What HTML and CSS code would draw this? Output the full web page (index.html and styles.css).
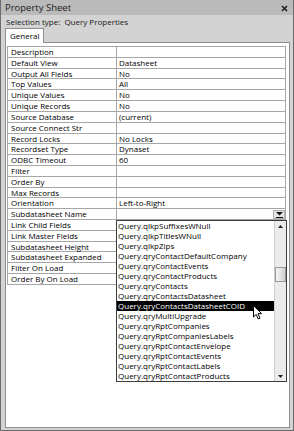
FILE: index.html
```html
<!DOCTYPE html>
<html lang="en">
<head>
<meta charset="utf-8">
<title>Property Sheet</title>
<link rel="stylesheet" href="styles.css">
</head>
<body>
<div class="sheet">
	<div class="titlebar">
		<span class="title">Property Sheet</span>
		<svg class="close" width="7" height="7" viewBox="0 0 7 7"><path d="M1 1 L6 6 M6 1 L1 6" stroke="#222" stroke-width="1.6"/></svg>
	</div>
	<div class="selection">Selection type:&nbsp; Query Properties</div>
	<div class="tabs"><div class="tab">General</div></div>
	<div class="panel">
		<div class="props">
			<div class="row"><div class="name">Description</div><div class="value"></div></div>
			<div class="row"><div class="name">Default View</div><div class="value">Datasheet</div></div>
			<div class="row"><div class="name">Output All Fields</div><div class="value">No</div></div>
			<div class="row"><div class="name">Top Values</div><div class="value">All</div></div>
			<div class="row"><div class="name">Unique Values</div><div class="value">No</div></div>
			<div class="row"><div class="name">Unique Records</div><div class="value">No</div></div>
			<div class="row"><div class="name">Source Database</div><div class="value">(current)</div></div>
			<div class="row"><div class="name">Source Connect Str</div><div class="value"></div></div>
			<div class="row"><div class="name">Record Locks</div><div class="value">No Locks</div></div>
			<div class="row"><div class="name">Recordset Type</div><div class="value">Dynaset</div></div>
			<div class="row"><div class="name">ODBC Timeout</div><div class="value">60</div></div>
			<div class="row"><div class="name">Filter</div><div class="value"></div></div>
			<div class="row"><div class="name">Order By</div><div class="value"></div></div>
			<div class="row"><div class="name">Max Records</div><div class="value"></div></div>
			<div class="row"><div class="name">Orientation</div><div class="value">Left-to-Right</div></div>
			<div class="row"><div class="name">Subdatasheet Name</div>
				<div class="value combo">
					<span class="drop"><svg width="7" height="6" viewBox="0 0 7 6"><path d="M0 0 H7 L3.5 3.5 Z" fill="#111"/><path d="M0 5.5 H7" stroke="#111"/></svg></span>
					<div class="list">
						<div class="items">
							<div class="item">Query.qlkpSuffixesWNull</div>
							<div class="item">Query.qlkpTitlesWNull</div>
							<div class="item">Query.qlkpZips</div>
							<div class="item">Query.qryContactDefaultCompany</div>
							<div class="item">Query.qryContactEvents</div>
							<div class="item">Query.qryContactProducts</div>
							<div class="item">Query.qryContacts</div>
							<div class="item">Query.qryContactsDatasheet</div>
							<div class="item selected">Query.qryContactsDatasheetCOID</div>
							<div class="item">Query.qryMultiUpgrade</div>
							<div class="item">Query.qryRptCompanies</div>
							<div class="item">Query.qryRptCompaniesLabels</div>
							<div class="item">Query.qryRptContactEnvelope</div>
							<div class="item">Query.qryRptContactEvents</div>
							<div class="item">Query.qryRptContactLabels</div>
							<div class="item">Query.qryRptContactProducts</div>
						</div>
						<div class="scroll">
							<div class="arrow"><svg width="5" height="3" viewBox="0 0 5 3"><path d="M0 3 L2.5 0 L5 3 Z" fill="#222"/></svg></div>
							<div class="track-top"></div>
							<div class="thumb"></div>
							<div class="track-bottom"></div>
							<div class="arrow"><svg width="5" height="3" viewBox="0 0 5 3"><path d="M0 0 L2.5 3 L5 0 Z" fill="#222"/></svg></div>
						</div>
						<svg class="cursor" width="10" height="15" viewBox="0 0 10 15"><path d="M0.5 0.5 V12 L3.2 9.4 L5.2 14 L7 13.2 L5 8.7 H8.6 Z" fill="#fff" stroke="#000" stroke-width="1"/></svg>
					</div>
				</div>
			</div>
			<div class="row"><div class="name">Link Child Fields</div><div class="value"></div></div>
			<div class="row"><div class="name">Link Master Fields</div><div class="value"></div></div>
			<div class="row"><div class="name">Subdatasheet Height</div><div class="value"></div></div>
			<div class="row"><div class="name">Subdatasheet Expanded</div><div class="value"></div></div>
			<div class="row"><div class="name">Filter On Load</div><div class="value"></div></div>
			<div class="row"><div class="name">Order By On Load</div><div class="value"></div></div>
		</div>
	</div>
</div>
</body>
</html>
```
FILE: styles.css
```css
html, body {
	margin: 0;
	padding: 0;
}
body {
	width: 294px;
	height: 431px;
	overflow: hidden;
	background: #d2d2d2;
	font-family: "Open Sans", "Noto Sans", sans-serif;
	font-size: 8px;
	color: #000;
}

.sheet {
	box-sizing: border-box;
	width: 294px;
	height: 431px;
	display: flex;
	flex-direction: column;
	border-left: 1px solid #6c6c6c;
	border-right: 1px solid #6c6c6c;
	border-bottom: 1px solid #6c6c6c;
	background: #d3d3d3;
}

.titlebar {
	height: 15px;
	display: flex;
	align-items: center;
	justify-content: space-between;
	padding: 0 5px 0 4px;
	background: #bababa;
	font-size: 9.5px;
	color: #1a1a1a;
}
.close {
	margin-top: 2px;
}

.selection {
	height: 13px;
	line-height: 13px;
	padding-left: 5px;
	color: #1a1a1a;
}

.tabs {
	height: 14px;
	display: flex;
	align-items: flex-end;
	padding-left: 4px;
}
.tab {
	box-sizing: border-box;
	height: 15px;
	margin-bottom: -1px;
	padding: 0 4px;
	line-height: 14px;
	background: #fff;
	border: 1px solid #8e8e8e;
	border-bottom: 0;
	position: relative;
	z-index: 1;
}

.panel {
	flex: 1;
	margin: 0 3px 2px 4px;
	padding: 3px 3px 0 1px;
	background: #fff;
	border: 1px solid #8e8e8e;
}

.props {
	border: 1px solid #a6a6a6;
	border-bottom: 0;
}
.row {
	box-sizing: border-box;
	height: 10.82px;
	display: flex;
	border-bottom: 1px solid #a6a6a6;
	line-height: 10px;
}
.name {
	width: 105px;
	padding-left: 3px;
	border-right: 1px solid #a6a6a6;
	white-space: nowrap;
}
.value {
	flex: 1;
	padding-left: 2px;
	white-space: nowrap;
}

.combo {
	position: relative;
}
.drop {
	position: absolute;
	right: 0;
	top: 1px;
	box-sizing: border-box;
	width: 12px;
	height: 9px;
	display: flex;
	align-items: center;
	justify-content: center;
	background: #e4e4e4;
	border: 1px solid #b0b0b0;
}

.list {
	position: absolute;
	left: -1px;
	right: -2px;
	top: 100%;
	margin-top: 1px;
	box-sizing: border-box;
	height: 162px;
	display: flex;
	background: #fff;
	border: 1px solid #3c3c3c;
	z-index: 2;
}
.items {
	flex: 1;
}
.item {
	height: 10px;
	line-height: 10px;
	padding-left: 1px;
	white-space: nowrap;
}
.selected {
	background: #000;
	color: #fff;
}

.scroll {
	width: 11px;
	display: flex;
	flex-direction: column;
	background: #ebebeb;
	border-left: 1px solid #cfcfcf;
}
.arrow {
	height: 10px;
	display: flex;
	align-items: center;
	justify-content: center;
}
.track-top {
	height: 36px;
}
.thumb {
	box-sizing: border-box;
	height: 15px;
	border: 1px solid #9a9a9a;
	background: linear-gradient(to right, #f6f6f6, #d0d0d0);
}
.track-bottom {
	flex: 1;
}

.cursor {
	position: absolute;
	left: 136px;
	top: 84px;
}
```
